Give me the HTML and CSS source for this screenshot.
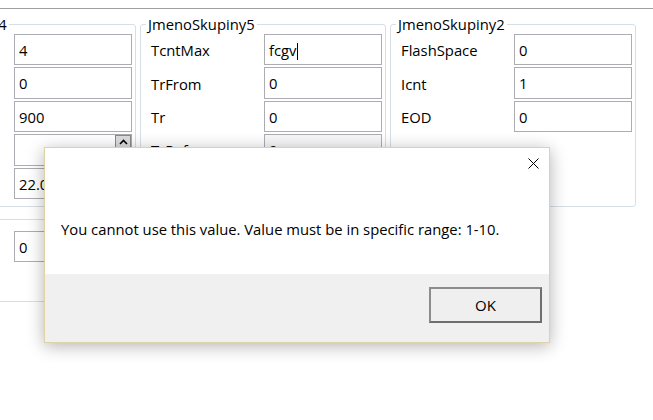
FILE: index.html
```html
<!DOCTYPE html>
<html lang="en">
<head>
  <meta charset="UTF-8">
  <title>Parametry skupin</title>
  <link rel="stylesheet" href="styles.css">
</head>
<body>
  <div class="topbar"></div>

  <!-- Group boxes -->
  <div class="groups">
    <fieldset class="group first">
      <legend>JmenoSkupiny4</legend>
      <div class="row"><span class="label"></span><div class="field">4</div></div>
      <div class="row"><span class="label"></span><div class="field">0</div></div>
      <div class="row"><span class="label"></span><div class="field">900</div></div>
      <div class="row"><span class="label"></span><div class="field spin"><span class="spin-up"><svg width="9" height="6" viewBox="0 0 9 6"><path d="M1 5 L4.5 1.5 L8 5" fill="none" stroke="#000" stroke-width="1.6"/></svg></span></div></div>
      <div class="row"><span class="label"></span><div class="field">22.05</div></div>
    </fieldset>

    <fieldset class="group">
      <legend>JmenoSkupiny5</legend>
      <div class="row"><span class="label">TcntMax</span><div class="field">fcgv<span class="caret"></span></div></div>
      <div class="row"><span class="label">TrFrom</span><div class="field">0</div></div>
      <div class="row"><span class="label">Tr</span><div class="field">0</div></div>
      <div class="row"><span class="label">TrRef</span><div class="field disabled">0</div></div>
      <div class="row"><span class="label">TrTo</span><div class="field">0</div></div>
    </fieldset>

    <fieldset class="group">
      <legend>JmenoSkupiny2</legend>
      <div class="row"><span class="label">FlashSpace</span><div class="field">0</div></div>
      <div class="row"><span class="label">Icnt</span><div class="field">1</div></div>
      <div class="row"><span class="label">EOD</span><div class="field">0</div></div>
    </fieldset>
  </div>

  <div class="groups lower">
    <div class="group plain first">
      <div class="row"><span class="label"></span><div class="field short">0</div></div>
    </div>
  </div>

  <!-- Message box -->
  <div class="dialog">
    <div class="dialog-body">
      <div class="dialog-close">
        <svg width="11" height="11" viewBox="0 0 11 11"><path d="M0.5 0.5 L10.5 10.5 M10.5 0.5 L0.5 10.5" stroke="#000" stroke-width="1"/></svg>
      </div>
      <p class="dialog-text">You cannot use this value. Value must be in specific range: 1-10.</p>
    </div>
    <div class="dialog-footer">
      <button class="ok-button">OK</button>
    </div>
  </div>
</body>
</html>
```

FILE: styles.css
```css
body {
  margin: 0;
  width: 653px;
  height: 420px;
  overflow: hidden;
  background: #ffffff;
  font-family: "Open Sans", "Noto Sans", sans-serif;
  font-size: 14.8px;
  color: #000000;
  position: relative;
}

.topbar {
  height: 8px;
  border-bottom: 1px solid #a0a0a0;
}

.groups {
  display: flex;
  gap: 4px;
  margin-top: 5px;
  align-items: stretch;
}

.group {
  box-sizing: border-box;
  width: 246px;
  flex: 0 0 246px;
  margin: 0;
  padding: 0 3px 5px 10px;
  min-width: 0;
  border: 1px solid #d5dfe5;
  border-radius: 3px;
}

.group.first {
  margin-left: -110px;
}

.group legend {
  margin-left: -5px;
  padding: 0 2px;
  line-height: 20px;
}

.group.first legend {
  margin-left: -3px;
}

/* Rows: label + text box */
.row {
  display: flex;
  align-items: center;
  height: 31.4px;
  margin-bottom: 2px;
}

.label {
  width: 113px;
  flex: 0 0 113px;
  padding-top: 1px;
}

.field {
  box-sizing: border-box;
  width: 118px;
  height: 100%;
  border: 1px solid #abadb3;
  padding: 5px 0 0 4px;
  background: #ffffff;
  white-space: nowrap;
  overflow: hidden;
}

.field.disabled {
  background: #f7f7f7;
}

.field.spin {
  display: flex;
  justify-content: flex-end;
  align-items: flex-start;
  padding: 0;
}

.spin-up {
  box-sizing: border-box;
  width: 16px;
  height: 13px;
  background: #dcdcdc;
  border: 1px solid #8a8a8a;
  display: flex;
  align-items: center;
  justify-content: center;
}

.caret {
  display: inline-block;
  width: 1px;
  height: 17px;
  background: #000000;
  vertical-align: -4px;
}

.lower {
  margin-top: 12px;
}

.group.plain {
  height: 83px;
  padding-top: 11px;
}

.field.short {
  height: 31px;
}

/* Message box */
.dialog {
  position: absolute;
  left: 44px;
  top: 147px;
  width: 504px;
  border: 1px solid #ddd3a6;
  background: #ffffff;
  box-shadow: 0 3px 16px rgba(0, 0, 0, 0.3);
}

.dialog-body {
  height: 126px;
  display: flex;
  flex-direction: column;
}

.dialog-close {
  align-self: flex-end;
  margin: 10px 10px 0 0;
  height: 11px;
  line-height: 0;
}

.dialog-text {
  margin: 50px 0 0 16px;
  font-size: 14.8px;
}

.dialog-footer {
  height: 68px;
  background: #f0f0f0;
  display: flex;
  justify-content: flex-end;
  align-items: flex-start;
  padding-right: 7px;
}

.ok-button {
  margin-top: 13px;
  width: 113px;
  height: 36px;
  font-family: inherit;
  font-size: 15px;
  color: #000000;
  background: #efefef;
  border: 2px solid #6e6e6e;
  border-top-color: #8c8c8c;
  border-left-color: #8c8c8c;
}
```
